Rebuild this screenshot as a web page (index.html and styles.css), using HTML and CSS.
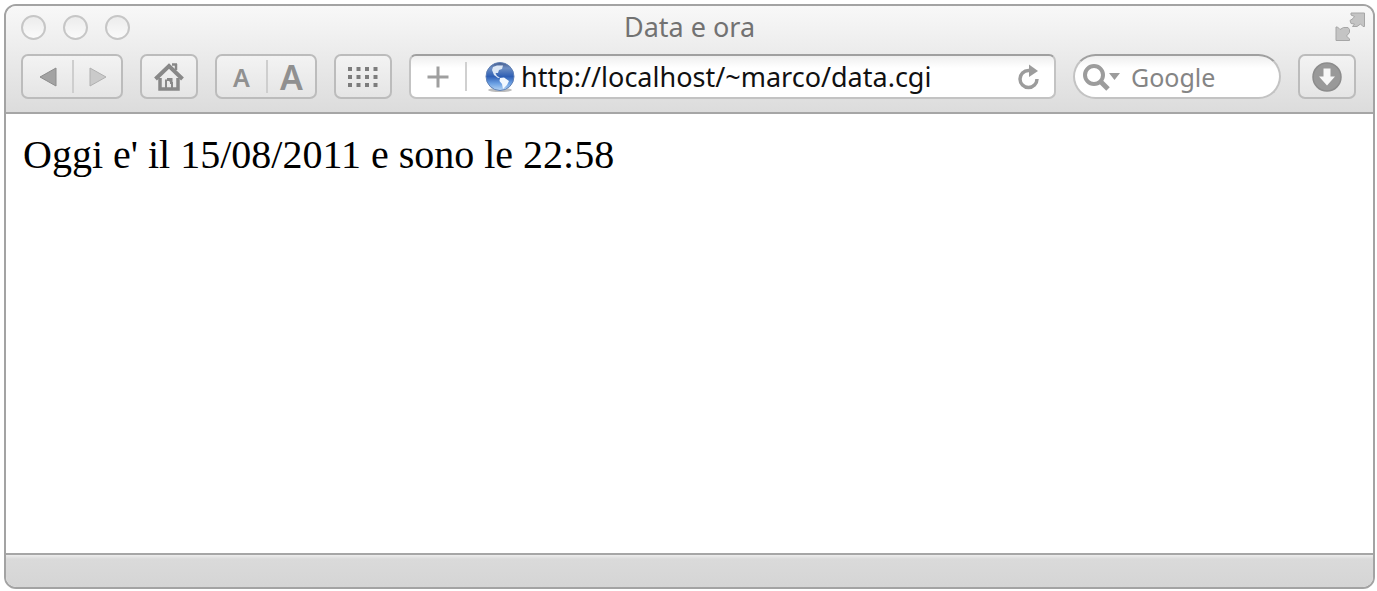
FILE: index.html
```html
<!DOCTYPE html>
<html lang="it">
<head>
<meta charset="utf-8">
<meta name="viewport" content="width=device-width, initial-scale=1">
<title>Data e ora</title>
<link rel="stylesheet" href="styles.css">
</head>
<body>
<div class="window">
  <header class="chrome">
    <div class="titlebar">
      <div class="lights">
        <button class="light" type="button" aria-label="Chiudi"></button>
        <button class="light" type="button" aria-label="Riduci"></button>
        <button class="light" type="button" aria-label="Ingrandisci"></button>
      </div>
      <h1 class="title">Data e ora</h1>
      <button class="fullscreen" type="button" aria-label="Schermo intero">
        <svg width="30" height="30" viewBox="0 0 30 30" fill="#c4c4c4" stroke="#a6a6a6" stroke-width="1">
          <path d="M16 1H29.500V14.500H28L25.500 12L22 14.500H17.500L19.500 12L16 11.500L15 8.500L18 6.500L19.500 4.500L16 3Z"/>
          <path d="M1 15H2.500L5 17.500L8.500 15.500H13L14.500 17.500V20.500L11.500 24L14.500 27V28.500H1Z"/>
        </svg>
      </button>
    </div>
    <div class="toolbar">
      <div class="group">
        <button class="segment" type="button" aria-label="Indietro">
          <svg width="18" height="20" viewBox="0 0 18 20"><path d="M1 10L17 1V19Z" fill="#a3a3a3" stroke="#8c8c8c"/></svg>
        </button>
        <button class="segment" type="button" aria-label="Avanti">
          <svg width="18" height="20" viewBox="0 0 18 20"><path d="M17 10L1 1V19Z" fill="#cacaca" stroke="#b0b0b0"/></svg>
        </button>
      </div>
      <div class="group">
        <button class="segment single" type="button" aria-label="Pagina iniziale">
          <svg width="30" height="30" viewBox="0 0 30 30" fill="none" stroke="#888">
            <path d="M1.500 17L15 4L28.500 17" stroke-width="4"/>
            <path d="M22 2V8M18 2.500H23" stroke-width="2.500"/>
            <path d="M6 16V27H24V16" stroke-width="3.500"/>
            <path d="M12 26V17.500M16 21H18V26" stroke-width="2"/>
            <path d="M13 17.500H17V20" stroke-width="3"/>
          </svg>
        </button>
      </div>
      <div class="group">
        <button class="segment small-a" type="button" aria-label="Testo più piccolo">A</button>
        <button class="segment big-a" type="button" aria-label="Testo più grande">A</button>
      </div>
      <div class="group">
        <button class="segment single" type="button" aria-label="Top Sites">
          <svg width="30" height="22" viewBox="0 0 30 22" fill="#7c7c7c">
            <path d="M0 1h4v4h-4zM8.500 1h4v4h-4zM17 1h4v4h-4zM25.500 1h4v4h-4zM0 9h4v4h-4zM8.500 9h4v4h-4zM17 9h4v4h-4zM25.500 9h4v4h-4zM0 17h4v4h-4zM8.500 17h4v4h-4zM17 17h4v4h-4zM25.500 17h4v4h-4z"/>
          </svg>
        </button>
      </div>
      <form class="field address">
        <button class="add" type="button" aria-label="Aggiungi segnalibro">
          <svg width="22" height="22" viewBox="0 0 22 22"><path d="M11 0.500V21.500M0.500 11H21.500" stroke="#9f9f9f" stroke-width="3"/></svg>
        </button>
        <svg class="globe" width="30" height="30" viewBox="0 0 30 30">
          <defs>
            <linearGradient id="sea" x1="0" y1="0" x2="0" y2="1">
              <stop offset="0" stop-color="#44598a"/>
              <stop offset="0.200" stop-color="#6d8fc4"/>
              <stop offset="0.500" stop-color="#2f5fb4"/>
              <stop offset="0.750" stop-color="#6ba0e3"/>
              <stop offset="1" stop-color="#b6d5f5"/>
            </linearGradient>
          </defs>
          <ellipse cx="15" cy="28" rx="12" ry="2" fill="#bdbdbd"/>
          <circle cx="15" cy="14.500" r="14" fill="url(#sea)" stroke="#6080b4"/>
          <path d="M8 5L12 3.500L18 3.500L17 7L14 8L13 11L10.500 11L12 14L15 15.500L13 16L9 13L7 8Z" fill="#dce7f5"/>
          <path d="M15 16L19 15.500L24 19L22 23L18 27L17 22L14.500 19Z" fill="#f2f8ff"/>
        </svg>
        <input class="url" type="text" aria-label="Indirizzo" value="http://localhost/~marco/data.cgi">
        <button class="reload" type="button" aria-label="Ricarica">
          <svg width="22" height="26" viewBox="0 0 22 26"><path d="M12 6.500H10.500A8.500 8.500 0 1 0 19 15" fill="none" stroke="#9c9c9c" stroke-width="3.500"/><path d="M11 0.500L20 7L11 13Z" fill="#9c9c9c"/></svg>
        </button>
      </form>
      <form class="field search">
        <svg class="lens" width="38" height="28" viewBox="0 0 38 28"><circle cx="11" cy="12" r="9" fill="none" stroke="#9c9c9c" stroke-width="4"/><path d="M17 18L25 26" stroke="#9c9c9c" stroke-width="5"/><path d="M26 10H37L31.500 17Z" fill="#9c9c9c"/></svg>
        <input class="query" type="text" aria-label="Cerca con Google" placeholder="Google">
      </form>
      <div class="group">
        <button class="segment single" type="button" aria-label="Download">
          <svg width="30" height="30" viewBox="0 0 30 30"><circle cx="15" cy="15" r="14" fill="#999" stroke="#8c8c8c" stroke-width="1.500"/><path d="M11.500 6.500H18.500V14.500H23L15 23.500L7 14.500H11.500Z" fill="#f7f7f7"/></svg>
        </button>
      </div>
    </div>
  </header>
  <main class="page">Oggi e' il 15/08/2011 e sono le 22:58</main>
  <footer class="statusbar"></footer>
</div>
</body>
</html>
```
FILE: styles.css
```css
* {
  box-sizing: border-box;
}

body {
  margin: 0;
  padding: 4px 2px 2px 4px;
  min-height: 100vh;
  display: flex;
  background: #fff;
  font-family: "Noto Sans", "Open Sans", sans-serif;
}

button,
input {
  margin: 0;
  padding: 0;
  border: 0;
  background: none;
  font: inherit;
  color: inherit;
}

svg {
  display: block;
  flex: none;
}

.window {
  flex: 1;
  min-width: 0;
  display: flex;
  flex-direction: column;
  overflow: hidden;
  border: 2px solid #a3a3a3;
  border-radius: 12px;
}

.chrome {
  border-bottom: 2px solid #a6a6a6;
  background: linear-gradient(#f8f8f8, #dcdcdc);
}

.titlebar {
  display: grid;
  grid-template-columns: 1fr auto 1fr;
  align-items: center;
  height: 42px;
  padding: 0 8px;
}

.lights {
  display: flex;
  gap: 17px;
  padding-left: 7px;
}

.light {
  width: 25px;
  height: 25px;
  border: 2px solid #c6c6c6;
  border-radius: 50%;
  background: linear-gradient(#ececec, #fafafa);
}

.title {
  margin: 0;
  font-size: 27px;
  font-weight: 400;
  line-height: 32px;
  color: #727272;
}

.fullscreen {
  justify-self: end;
}

.toolbar {
  display: flex;
  gap: 17px;
  padding: 6px 17px 13px 15px;
}

.group {
  display: flex;
  align-items: center;
  height: 45px;
  border: 2px solid #bcbcbc;
  border-radius: 7px;
  background: linear-gradient(#f3f3f3, #e5e5e5);
}

.segment {
  display: flex;
  align-items: center;
  justify-content: center;
  width: 49px;
  height: 33px;
  font-weight: 600;
  color: #909090;
}

.segment + .segment {
  border-left: 2px solid #cecece;
}

.single {
  width: 54px;
}

.small-a {
  font-size: 25px;
}

.big-a {
  font-size: 34px;
}

.field {
  display: flex;
  align-items: center;
  height: 45px;
  border: 2px solid #c3c3c3;
  border-top-color: #a0a0a0;
  background: linear-gradient(#efefef, #fff 12px);
}

.address {
  flex: 1;
  min-width: 0;
  border-radius: 7px;
}

.add {
  display: flex;
  align-items: center;
  justify-content: center;
  width: 56px;
  height: 29px;
  border-right: 2px solid #d0d0d0;
}

.globe {
  margin: 0 6px 0 18px;
}

.url {
  flex: 1;
  min-width: 0;
  height: 37px;
  font-size: 27px;
  color: #111;
}

.reload {
  margin-right: 14px;
}

.search {
  width: 208px;
  padding: 0 16px 0 8px;
  gap: 10px;
  border-radius: 23px;
}

.query {
  width: 100%;
  min-width: 0;
  height: 37px;
  font-size: 25px;
}

.query::placeholder {
  color: #858585;
  opacity: 1;
}

.page {
  flex: 1;
  padding: 18px 17px;
  background: #fff;
  font-family: "Liberation Serif", "Times New Roman", serif;
  font-size: 40px;
  line-height: 46px;
  color: #000;
}

.statusbar {
  height: 34px;
  border-top: 2px solid #a6a6a6;
  background: linear-gradient(#ececec, #dadada 4px, #d5d5d5);
}
```
